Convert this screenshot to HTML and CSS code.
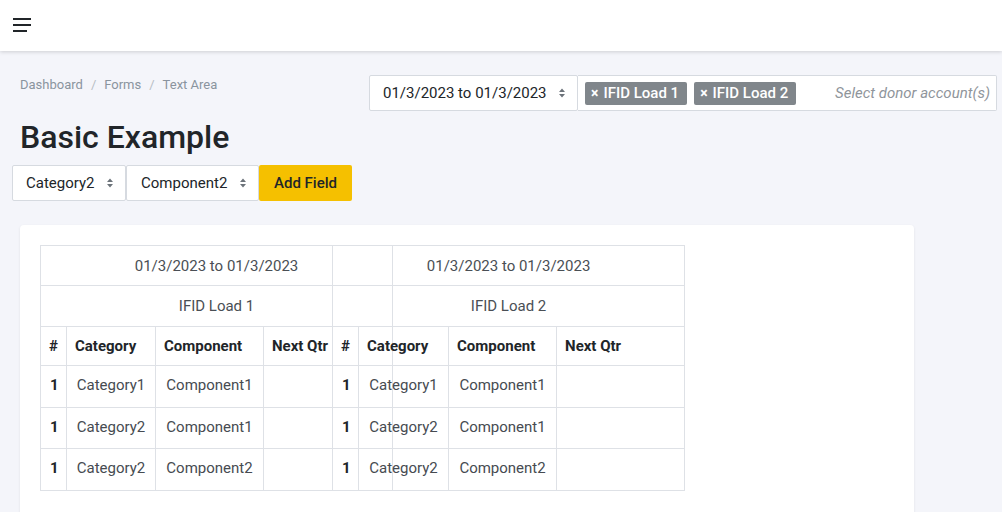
FILE: index.html
```html
<!DOCTYPE html>
<html>
<head>
<meta charset="utf-8">
<link rel="stylesheet" href="styles.css">
</head>
<body>
<header class="topbar">
  <button class="burger" aria-label="menu">
    <span class="bar"></span><span class="bar"></span><span class="bar short"></span>
  </button>
</header>
<main class="main">
  <div class="toprow">
    <nav class="crumbs">
      <span>Dashboard</span><span class="sep">/</span><span>Forms</span><span class="sep">/</span><span>Text Area</span>
    </nav>
    <div class="filters">
      <div class="select date">
        <span>01/3/2023 to 01/3/2023</span>
        <svg class="updown" width="6" height="10" viewBox="0 0 6 10"><path d="M0 4 L3 0.5 L6 4 Z M0 6 L3 9.5 L6 6 Z" fill="#6c737a"/></svg>
      </div>
      <div class="tagbox">
        <span class="tag"><span class="x">×</span>IFID Load 1</span>
        <span class="tag"><span class="x">×</span>IFID Load 2</span>
        <span class="placeholder">Select donor account(s)</span>
      </div>
    </div>
  </div>
  <h1 class="title">Basic Example</h1>
  <div class="controls">
    <div class="select cat">
      <span>Category2</span>
      <svg class="updown" width="6" height="10" viewBox="0 0 6 10"><path d="M0 4 L3 0.5 L6 4 Z M0 6 L3 9.5 L6 6 Z" fill="#6c737a"/></svg>
    </div>
    <div class="select comp">
      <span>Component2</span>
      <svg class="updown" width="6" height="10" viewBox="0 0 6 10"><path d="M0 4 L3 0.5 L6 4 Z M0 6 L3 9.5 L6 6 Z" fill="#6c737a"/></svg>
    </div>
    <button class="addbtn">Add Field</button>
  </div>
  <section class="card">
    <div class="tables">
      <table class="grid first">
        <colgroup><col class="c-num"><col class="c-cat"><col class="c-comp"><col class="c-nq1"></colgroup>
        <tr class="r1"><td colspan="4" class="head">01/3/2023 to 01/3/2023</td></tr>
        <tr class="r2"><td colspan="4" class="head">IFID Load 1</td></tr>
        <tr class="r3"><th>#</th><th>Category</th><th>Component</th><th>Next Qtr</th></tr>
        <tr class="rb"><td class="n">1</td><td>Category1</td><td>Component1</td><td></td></tr>
        <tr class="rb"><td class="n">1</td><td>Category2</td><td>Component1</td><td></td></tr>
        <tr class="rb"><td class="n">1</td><td>Category2</td><td>Component2</td><td></td></tr>
      </table>
      <table class="grid second">
        <colgroup><col class="c-num"><col class="c-cat2"><col class="c-comp"><col class="c-nq2"></colgroup>
        <tr class="r1"><td colspan="4" class="head">01/3/2023 to 01/3/2023</td></tr>
        <tr class="r2"><td colspan="4" class="head">IFID Load 2</td></tr>
        <tr class="r3"><th>#</th><th>Category</th><th>Component</th><th>Next Qtr</th></tr>
        <tr class="rb"><td class="n">1</td><td>Category1</td><td>Component1</td><td></td></tr>
        <tr class="rb"><td class="n">1</td><td>Category2</td><td>Component1</td><td></td></tr>
        <tr class="rb"><td class="n">1</td><td>Category2</td><td>Component2</td><td></td></tr>
      </table>
    </div>
  </section>
</main>
</body>
</html>
```
FILE: styles.css
```css
* { box-sizing: border-box; }
html, body { margin: 0; padding: 0; }
body {
  background: #f4f5fa;
  font-family: Roboto, "Liberation Sans", sans-serif;
  color: #212529;
  font-size: 15px;
  height: 512px;
  overflow: hidden;
}
.topbar {
  height: 51px;
  background: #fff;
  box-shadow: 0 1px 4px rgba(0,0,0,0.16);
  display: flex;
  align-items: center;
  padding-left: 13px;
  position: relative;
  z-index: 2;
}
.burger {
  border: 0; background: none; padding: 0;
  width: 18px; height: 14px;
  display: flex; flex-direction: column; justify-content: space-between;
  margin-top: -2px;
}
.bar { display: block; width: 18px; height: 2px; background: #212529; }
.bar.short { width: 14px; }

.main { padding: 24px 5px 0 12px; }
.toprow {
  display: flex;
  justify-content: space-between;
  align-items: flex-start;
  height: 35px;
}
.crumbs {
  padding-left: 8px;
  font-size: 13px;
  line-height: 20px;
  color: #8a949e;
}
.crumbs .sep { margin: 0 8px; color: #b7bdc4; }
.filters { display: flex; }
.select {
  display: flex;
  align-items: center;
  background: #fff;
  border: 1px solid #d6dae0;
  border-radius: 2px;
  font-size: 15px;
  color: #212529;
}
.select .updown { margin-left: auto; }
.date { width: 209px; height: 36px; padding: 0 12px 0 13px; }
.tagbox {
  width: 419px; height: 36px;
  background: #fff;
  border: 1px solid #d6dae0;
  border-left: 0;
  border-radius: 0 2px 2px 0;
  display: flex;
  align-items: center;
  padding: 0 6px 0 7px;
  gap: 7px;
}
.tag {
  height: 23px;
  background: #80868b;
  color: #fff;
  border-radius: 2px;
  font-size: 15px;
  font-weight: 500;
  line-height: 23px;
  padding: 0 8px 0 6px;
  display: flex;
  align-items: center;
}
.tag .x { font-size: 14px; font-weight: 700; margin-right: 5px; }
.placeholder {
  margin-left: auto;
  font-style: italic;
  font-size: 15px;
  color: #8f959b;
}

.title {
  margin: 8px 0 0 8px;
  font-size: 32px;
  font-weight: 500;
  line-height: 38px;
  color: #212529;
}
.controls { display: flex; margin-top: 9px; height: 36px; }
.cat { width: 114px; height: 36px; padding: 0 12px 0 13px; }
.comp { width: 133px; height: 36px; padding: 0 12px 0 14px; }
.addbtn {
  width: 93px; height: 36px;
  border: 0;
  border-radius: 2px;
  background: #f5c000;
  color: #212529;
  font-family: Roboto, "Liberation Sans", sans-serif;
  font-size: 15px;
  font-weight: 500;
  padding: 0;
}

.card {
  margin: 24px 0 0 8px;
  width: 894px;
  height: 300px;
  background: #fff;
  border-radius: 4px;
  box-shadow: 0 1px 3px rgba(0,0,0,0.08);
  padding: 20px;
}
.tables { display: flex; align-items: flex-start; }
.grid {
  border-collapse: collapse;
  table-layout: fixed;
  width: 352px;
  font-size: 15px;
}
.grid.second { margin-left: -61px; }
.grid td, .grid th {
  border: 1px solid #dee1e6;
  padding: 0 9px;
  background: transparent;
  white-space: nowrap;
  overflow: visible;
}
.grid th { padding: 0 8px; }
.c-num { width: 26px; }
.c-cat { width: 89px; }
.c-cat2 { width: 90px; }
.c-comp { width: 108px; }
.c-nq1 { width: 129px; }
.c-nq2 { width: 128px; }
.r1 { height: 40px; }
.r2 { height: 41px; }
.r3 { height: 39px; }
.rb { height: 41.7px; }
.head { text-align: center; color: #4a4f55; }
.grid th { text-align: left; font-weight: 700; color: #212529; }
.grid .rb td { text-align: center; color: #464b51; padding-bottom: 3px; }
.grid .rb td.n { font-weight: 700; color: #212529; }
```
